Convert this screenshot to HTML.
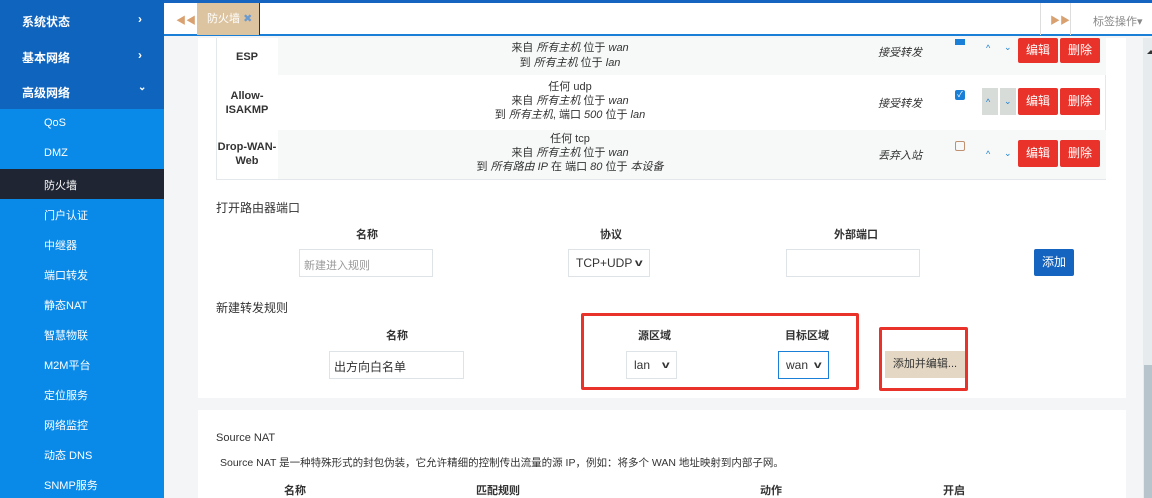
<!DOCTYPE html>
<html><head><meta charset="utf-8"><style>
*{margin:0;padding:0;box-sizing:border-box}
body{width:1152px;height:498px;overflow:hidden;position:relative;background:#f4f5f6;font-family:"Liberation Sans","Noto Sans CJK SC",sans-serif;font-size:11px;color:#333}
.a{position:absolute}
.sb{left:0;top:0;width:164px;height:498px;background:#0a8ae8}
.top{left:0;top:0;width:164px;height:109px;background:#0f64be}
.mi{position:absolute;left:22px;color:#fff;font-weight:bold;font-size:12px}
.si{position:absolute;left:44px;color:#fff;font-size:11px}
.c{text-align:center}
.btn{position:absolute;color:#fff;background:#e8322a;border-radius:2px;text-align:center;font-size:12px;line-height:27px;height:27px}
.inp{position:absolute;background:#fff;border:1px solid #dde3e6;height:28px}
.sel{position:absolute;background:#fff;border:1px solid #dde3e6;height:28px;display:flex;justify-content:space-between;align-items:center;padding:0 7px;font-size:12px;white-space:nowrap}
.sel b{font-size:10px;transform:scaleX(1.4)}
.h{position:absolute;font-weight:bold;font-size:11px;color:#333}
i{font-style:italic}
</style></head><body>
<div class="a" style="left:0;top:0;width:1152px;height:3px;background:#1565c0"></div>
<div class="a sb"></div><div class="a top"></div>
<div class="mi" style="top:13px">系统状态</div><div class="mi" style="left:138px;top:12px">›</div>
<div class="mi" style="top:49px">基本网络</div><div class="mi" style="left:138px;top:48px">›</div>
<div class="mi" style="top:84px">高级网络</div><div class="mi" style="left:138px;top:82px;font-size:10px">⌄</div>
<div class="a" style="left:0;top:169px;width:164px;height:30px;background:#1f2533"></div>
<div class="si" style="top:117px">QoS</div>
<div class="si" style="top:147px">DMZ</div>
<div class="si" style="top:177px">防火墙</div>
<div class="si" style="top:207px">门户认证</div>
<div class="si" style="top:237px">中继器</div>
<div class="si" style="top:267px">端口转发</div>
<div class="si" style="top:297px">静态NAT</div>
<div class="si" style="top:327px">智慧物联</div>
<div class="si" style="top:357px">M2M平台</div>
<div class="si" style="top:387px">定位服务</div>
<div class="si" style="top:417px">网络监控</div>
<div class="si" style="top:447px">动态 DNS</div>
<div class="si" style="top:477px">SNMP服务</div>
<!-- tab bar -->
<div class="a" style="left:164px;top:3px;width:988px;height:33px;background:#fff;border-bottom:2px solid #1a7fd6"></div>
<div class="a" style="left:176px;top:12px;color:#d9a070;font-size:10px">◀◀</div>
<div class="a" style="left:197px;top:3px;width:63px;height:32px;background:#dcc4a0;border-right:1px solid #333;color:#fff;font-size:11px;line-height:32px;padding-left:10px">防火墙 <span style="color:#6a9ad0">✖</span></div>
<div class="a" style="left:1040px;top:3px;width:1px;height:32px;background:#ddd"></div>
<div class="a" style="left:1070px;top:3px;width:1px;height:32px;background:#ddd"></div>
<div class="a" style="left:1050px;top:12px;color:#d9a070;font-size:10px">▶▶</div>
<div class="a" style="left:1093px;top:13px;color:#888;font-size:11px">标签操作▾</div>
<!-- panel 1 -->
<div class="a" style="left:198px;top:38px;width:928px;height:360px;background:#fff"></div>
<div class="a" style="left:216px;top:38px;width:890px;height:142px;border:1px solid #e4e8ea;border-top:none"></div>
<div class="a" style="left:278px;top:38px;width:828px;height:37px;background:#f7f8f8"></div>
<div class="a" style="left:278px;top:130px;width:828px;height:49px;background:#f7f8f8"></div>
<div class="h c" style="left:216px;top:51px;width:62px">ESP</div>
<div class="h c" style="left:216px;top:89px;width:62px;line-height:14px">Allow-<br>ISAKMP</div>
<div class="h c" style="left:216px;top:140px;width:62px;line-height:14px">Drop-WAN-<br>Web</div>
<div class="a c" style="left:420px;top:41px;width:300px;line-height:15px">来自 <i>所有主机</i> 位于 <i>wan</i><br>到 <i>所有主机</i> 位于 <i>lan</i></div>
<div class="a c" style="left:420px;top:80px;width:300px;line-height:14px">任何 udp<br>来自 <i>所有主机</i> 位于 <i>wan</i><br>到 <i>所有主机</i>, 端口 <i>500</i> 位于 <i>lan</i></div>
<div class="a c" style="left:400px;top:132px;width:340px;line-height:14px">任何 tcp<br>来自 <i>所有主机</i> 位于 <i>wan</i><br>到 <i>所有路由 IP</i> 在 端口 <i>80</i> 位于 <i>本设备</i></div>
<div class="a" style="left:878px;top:44px"><i>接受转发</i></div>
<div class="a" style="left:878px;top:95px"><i>接受转发</i></div>
<div class="a" style="left:878px;top:147px"><i>丢弃入站</i></div>
<div class="a" style="left:955px;top:39px;width:10px;height:6px;background:#1a7fd6"></div>
<div class="a" style="left:955px;top:90px;width:10px;height:10px;background:#1a7fd6;border-radius:2px;color:#fff;font-size:8px;line-height:10px;text-align:center">✓</div>
<div class="a" style="left:955px;top:141px;width:10px;height:10px;border:1px solid #c09070;border-radius:2px"></div>
<div class="a" style="left:982px;top:88px;width:16px;height:27px;background:#d8dcd8"></div>
<div class="a" style="left:1000px;top:88px;width:16px;height:27px;background:#d8dcd8"></div>
<div class="a" style="left:986px;top:43px;color:#1a7fd6;font-size:9px">^</div><div class="a" style="left:1004px;top:42px;color:#1a7fd6;font-size:9px">⌄</div>
<div class="a" style="left:986px;top:97px;color:#1a7fd6;font-size:9px">^</div><div class="a" style="left:1004px;top:96px;color:#1a7fd6;font-size:9px">⌄</div>
<div class="a" style="left:986px;top:149px;color:#1a7fd6;font-size:9px">^</div><div class="a" style="left:1004px;top:148px;color:#1a7fd6;font-size:9px">⌄</div>
<div class="btn" style="left:1018px;top:38px;width:40px;height:25px;line-height:25px">编辑</div><div class="btn" style="left:1060px;top:38px;width:40px;height:25px;line-height:25px">删除</div>
<div class="btn" style="left:1018px;top:88px;width:40px">编辑</div><div class="btn" style="left:1060px;top:88px;width:40px">删除</div>
<div class="btn" style="left:1018px;top:140px;width:40px">编辑</div><div class="btn" style="left:1060px;top:140px;width:40px">删除</div>
<!-- open port -->
<div class="a" style="left:216px;top:199px;font-size:12px">打开路由器端口</div>
<div class="h" style="left:356px;top:226px">名称</div>
<div class="h" style="left:600px;top:226px">协议</div>
<div class="h" style="left:834px;top:226px">外部端口</div>
<div class="inp" style="left:299px;top:249px;width:134px;color:#999;padding:7px 4px">新建进入规则</div>
<div class="sel" style="left:568px;top:249px;width:82px">TCP+UDP <b>v</b></div>
<div class="inp" style="left:786px;top:249px;width:134px"></div>
<div class="a" style="left:1034px;top:249px;width:40px;height:27px;background:#1565c0;color:#fff;text-align:center;line-height:27px;font-size:12px;border-radius:2px">添加</div>
<!-- new forward -->
<div class="a" style="left:216px;top:299px;font-size:12px">新建转发规则</div>
<div class="h" style="left:386px;top:327px">名称</div>
<div class="h" style="left:638px;top:327px">源区域</div>
<div class="h" style="left:785px;top:327px">目标区域</div>
<div class="inp" style="left:329px;top:351px;width:135px;padding:6px 4px;font-size:12px">出方向白名单</div>
<div class="sel" style="left:626px;top:351px;width:51px">lan <b>v</b></div>
<div class="sel" style="left:778px;top:351px;width:51px;border-color:#1a7fd6">wan <b>v</b></div>
<div class="a" style="left:581px;top:313px;width:278px;height:77px;border:3px solid #e8322a;border-radius:2px"></div>
<div class="a" style="left:879px;top:327px;width:89px;height:64px;border:3px solid #e8322a;border-radius:2px"></div>
<div class="a" style="left:885px;top:351px;width:80px;height:27px;background:#e4d8c4;line-height:27px;text-align:center;font-size:11px">添加并编辑...</div>
<!-- panel 2 -->
<div class="a" style="left:198px;top:410px;width:928px;height:88px;background:#fff"></div>
<div class="a" style="left:216px;top:432px;font-size:11px">Source NAT</div>
<div class="a" style="left:220px;top:455px;font-size:10.5px">Source NAT 是一种特殊形式的封包伪装，它允许精细的控制传出流量的源 IP，例如：将多个 WAN 地址映射到内部子网。</div>
<div class="h" style="left:284px;top:482px">名称</div>
<div class="h" style="left:476px;top:482px">匹配规则</div>
<div class="h" style="left:760px;top:482px">动作</div>
<div class="h" style="left:943px;top:482px">开启</div>
<!-- scrollbar -->
<div class="a" style="left:1143px;top:38px;width:9px;height:460px;background:#e6ebee"></div>
<div class="a" style="left:1144px;top:365px;width:8px;height:133px;background:#b8c4cc"></div>
<div class="a" style="left:1147px;top:50px;width:0;height:0;border-left:4px solid transparent;border-right:4px solid transparent;border-bottom:4px solid #333"></div>
</body></html>
